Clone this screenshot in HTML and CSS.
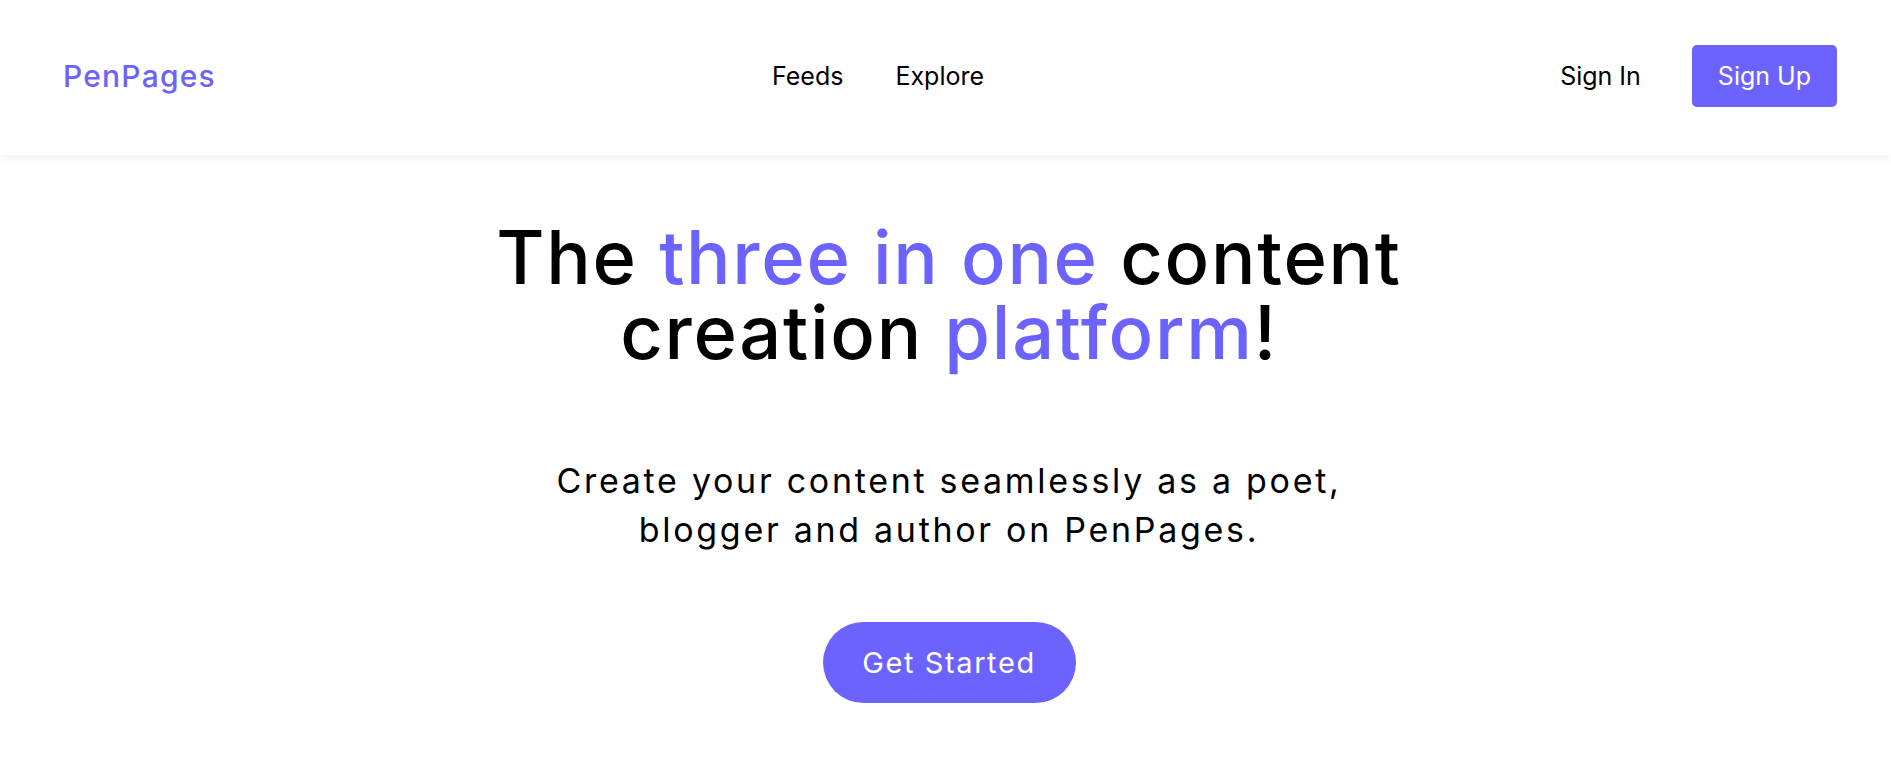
FILE: index.html
```html
<!DOCTYPE html>
<html lang="en">
<head>
<meta charset="utf-8">
<title>PenPages</title>
<link rel="stylesheet" href="styles.css">
</head>
<body>
<header class="topbar">
  <a class="logo" href="#">PenPages</a>
  <nav class="nav">
    <a class="nav-link" href="#">Feeds</a>
    <a class="nav-link" href="#">Explore</a>
  </nav>
  <div class="auth">
    <a class="signin" href="#">Sign In</a>
    <a class="signup" href="#">Sign Up</a>
  </div>
</header>
<main class="hero">
  <h1 class="headline"><span class="line">The <span class="accent">three in one</span> content</span><span class="line">creation <span class="accent">platform</span>!</span></h1>
  <p class="lead">Create your content seamlessly as a poet,<br>blogger and author on PenPages.</p>
  <a class="cta" href="#">Get Started</a>
</main>
</body>
</html>
```
FILE: styles.css
```css
* { box-sizing: border-box; }
body {
  margin: 0;
  font-family: "Inter", "Liberation Sans", sans-serif;
  color: #000;
  background: #fff;
}
a { text-decoration: none; color: inherit; }
.topbar {
  height: 155px;
  display: flex;
  align-items: center;
  justify-content: space-between;
  padding: 0 54px 4px 63px;
  box-shadow: 0 2px 10px rgba(0,0,0,0.07);
  position: relative;
}
.logo {
  color: #6c63ff;
  font-size: 30px;
  font-weight: 500;
  letter-spacing: 1.2px;
}
.nav {
  display: flex;
  gap: 52px;
  font-size: 25px;
  margin-right: 20px;
}
.auth {
  display: flex;
  align-items: center;
  gap: 51px;
  font-size: 25px;
}
.signup {
  background: #6c63ff;
  color: #fff;
  height: 62px;
  padding: 0 26px;
  border-radius: 5px;
  display: flex;
  align-items: center;
}
.hero {
  display: flex;
  flex-direction: column;
  align-items: center;
  text-align: center;
  padding-left: 7px;
}
.headline {
  margin: 65px 0 0;
  font-size: 74px;
  font-weight: 500;
  line-height: 75px;
  letter-spacing: 1.7px;
  display: flex;
  flex-direction: column;
  align-items: center;
}
.line {
  display: block;
  height: 75px;
  white-space: nowrap;
}
.accent {
  color: #6c63ff;
  display: inline-block;
  height: 75px;
}
.lead {
  margin: 86px 0 0;
  font-size: 34px;
  line-height: 49px;
  letter-spacing: 2.7px;
}
.cta {
  margin-top: 68px;
  background: #6c63ff;
  color: #fff;
  font-size: 29px;
  letter-spacing: 1.6px;
  height: 81px;
  width: 253px;
  border-radius: 41px;
  display: flex;
  align-items: center;
  justify-content: center;
}
```
